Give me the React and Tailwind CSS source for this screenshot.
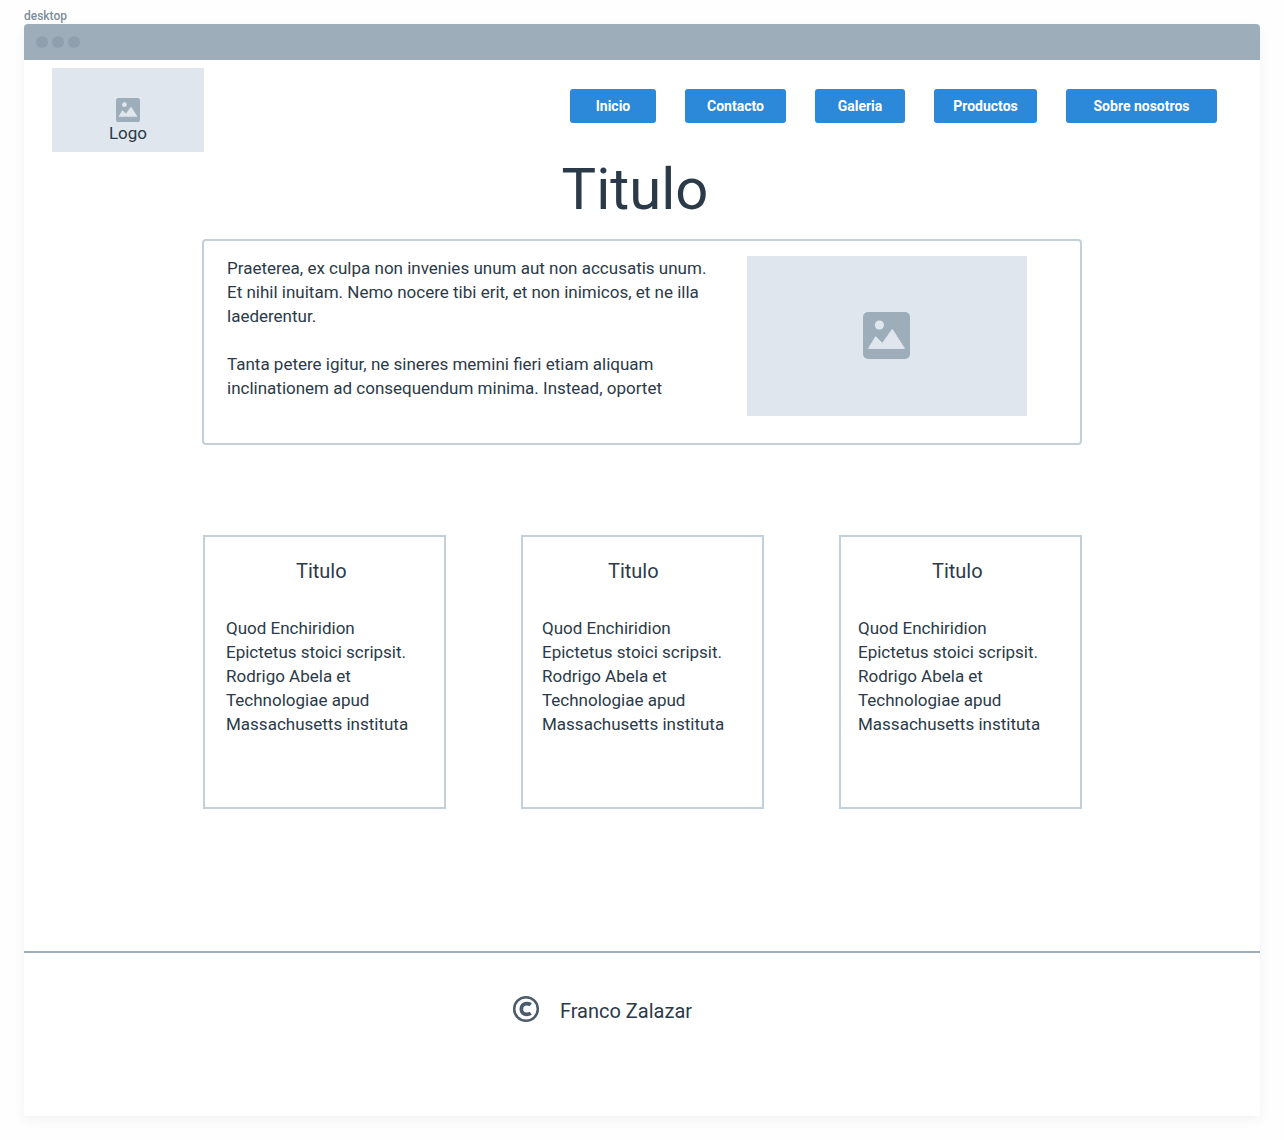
const links = [
  { label: "Inicio", width: "w-[86px]" },
  { label: "Contacto", width: "w-[101px]" },
  { label: "Galeria", width: "w-[90px]" },
  { label: "Productos", width: "w-[103px]" },
  { label: "Sobre nosotros", width: "w-[151px]" },
];

const cards = [
  { id: 1, heading: "pl-[91px]", body: "pl-[21px]" },
  { id: 2, heading: "pl-[85px]", body: "pl-[19px]" },
  { id: 3, heading: "pl-[91px]", body: "pl-[17px]" },
];

function ImageIcon({ className }) {
  return (
    <svg viewBox="0 0 47 47" className={className} aria-hidden="true">
      <rect width="47" height="47" rx="5" fill="#9eadba" />
      <circle cx="16.4" cy="13" r="4.6" fill="#dfe6ee" />
      <path
        d="M5.6 36.4 12.7 24.6 19.3 31.4 29.3 17.4 41.400 36.4Z"
        fill="#dfe6ee"
        stroke="#dfe6ee"
        strokeWidth="1"
        strokeLinejoin="round"
      />
    </svg>
  );
}

function CopyrightIcon() {
  return (
    <svg viewBox="0 0 28 28" className="size-7" fill="none" stroke="#4b5c6b" role="img" aria-label="Copyright">
      <circle cx="14" cy="14" r="11.8" strokeWidth="2.5" />
      <path d="M18.8 9.700C17.600 8.900 16.300 8.600 14.800 8.600 11.400 8.600 9.300 10.800 9.300 14s2.100 5.400 5.500 5.400c1.500 0 2.800-.3 4-1.100" strokeWidth="3.700" />
    </svg>
  );
}

export default function App() {
  return (
    <div className="min-h-screen bg-[#fefefe] px-6 pt-2 pb-6 font-[Roboto,sans-serif] text-[#2b3a48]">
      <p className="text-xs leading-4 font-medium text-[#7d8d9b]">desktop</p>
      <div className="rounded-t bg-white shadow-[0_4px_12px_rgba(0,0,0,0.05)]">
        <div className="flex h-9 items-center gap-1 rounded-t bg-[#9eadba] px-3">
          <span className="size-3 rounded-full bg-[#8f9fae]" />
          <span className="size-3 rounded-full bg-[#8f9fae]" />
          <span className="size-3 rounded-full bg-[#8f9fae]" />
        </div>

        <header className="flex flex-wrap items-start justify-between gap-4 pt-2 pr-[43px] pl-7">
          <div className="flex h-[84px] w-[152px] flex-col items-center bg-[#dfe6ee] pt-[30px]">
            <ImageIcon className="size-6" />
            <span className="text-[17px] leading-[22px]">Logo</span>
          </div>
          <nav className="flex flex-wrap gap-[29px] pt-[21px]">
            {links.map((link) => (
              <button
                key={link.label}
                type="button"
                className={`h-[34px] rounded-[3px] bg-[#2c88d9] text-sm font-bold text-white ${link.width}`}
              >
                {link.label}
              </button>
            ))}
          </nav>
        </header>

        <main className="mx-auto max-w-[880px]">
          <h1 className="pr-[14px] text-center text-[58px] leading-[74px]">Titulo</h1>

          <section className="mt-[13px] flex min-h-[206px] items-start justify-between rounded border-2 border-[#c3cfd9] pt-[15px] pr-[53px] pb-[27px] pl-[23px]">
            <div className="text-[17px] leading-6">
              <p>
                Praeterea, ex culpa non invenies unum aut non accusatis unum.
                <br />
                Et nihil inuitam. Nemo nocere tibi erit, et non inimicos, et ne illa
                <br />
                laederentur.
              </p>
              <p className="mt-6">
                Tanta petere igitur, ne sineres memini fieri etiam aliquam
                <br />
                inclinationem ad consequendum minima. Instead, oportet
              </p>
            </div>
            <div className="flex h-40 w-[280px] shrink-0 items-center justify-center bg-[#dfe6ee] pr-px pb-px">
              <ImageIcon className="size-[47px]" />
            </div>
          </section>

          <section className="mt-[90px] grid grid-cols-3 gap-[75px] pl-px">
            {cards.map((card) => (
              <article key={card.id} className="min-h-[274px] border-2 border-[#c3cfd9] pt-5">
                <h2 className={`text-[20px] leading-7 ${card.heading}`}>Titulo</h2>
                <p className={`pt-[31px] text-[17px] leading-6 ${card.body}`}>
                  Quod Enchiridion
                  <br />
                  Epictetus stoici scripsit.
                  <br />
                  Rodrigo Abela et
                  <br />
                  Technologiae apud
                  <br />
                  Massachusetts instituta
                </p>
              </article>
            ))}
          </section>
        </main>

        <footer className="mt-[142px] flex min-h-[165px] items-start justify-center gap-5 border-t-2 border-[#9eadba] pt-[42px] pr-[80px]">
          <CopyrightIcon />
          <span className="text-[20px] leading-8">Franco Zalazar</span>
        </footer>
      </div>
    </div>
  );
}
